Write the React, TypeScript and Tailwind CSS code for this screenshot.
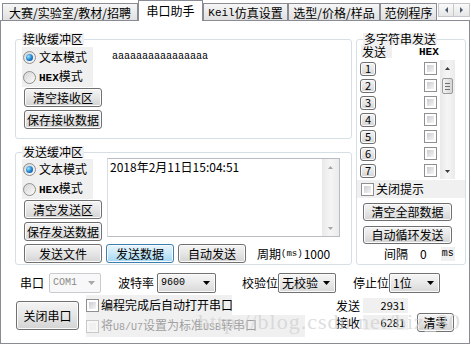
import React from "react";

type Dir = "up" | "down" | "left" | "right";

function Tri({ dir, color = "#3c3c3c", w = 5, h = 3 }: { dir: Dir; color?: string; w?: number; h?: number }) {
  const vert = dir === "up" || dir === "down";
  const W = vert ? w : h;
  const H = vert ? h : w;
  const pts = {
    up: `0,${H} ${W / 2},0 ${W},${H}`,
    down: `0,0 ${W},0 ${W / 2},${H}`,
    left: `${W},0 ${W},${H} 0,${H / 2}`,
    right: `0,0 ${W},${H / 2} 0,${H}`,
  }[dir];
  return (
    <svg width={W} height={H} viewBox={`0 0 ${W} ${H}`} className="block shrink-0">
      <polygon points={pts} fill={color} />
    </svg>
  );
}

function Btn({ children, className = "", hot = false }: { children: React.ReactNode; className?: string; hot?: boolean }) {
  return (
    <div
      className={`flex shrink-0 items-center justify-center rounded-[3px] border leading-none shadow-[inset_0_0_0_1px_#fbfbfb] ${
        hot
          ? "border-[#3c7fb1] bg-linear-to-b from-[#e8f5fc] via-[#c9e8f8] to-[#a2d6f3]"
          : "border-[#707070] bg-linear-to-b from-[#f4f4f4] via-[#e6e6e6] to-[#d3d3d3]"
      } ${className}`}
    >
      {children}
    </div>
  );
}

function Radio({ on = false }: { on?: boolean }) {
  return (
    <span className="flex h-[13px] w-[13px] shrink-0 items-center justify-center rounded-full border border-[#8e8f8f] bg-linear-to-br from-[#d4d4d4] to-[#fbfbfb]">
      {on && (
        <span className="h-[7px] w-[7px] rounded-full bg-[radial-gradient(circle_at_35%_35%,#9be6ff,#1d7ccc_55%,#0b3f78)]" />
      )}
    </span>
  );
}

function Check({ disabled = false }: { disabled?: boolean }) {
  return (
    <span
      className={`block h-[13px] w-[13px] shrink-0 border p-[2px] ${
        disabled ? "border-[#c8c8c8] bg-[#f7f7f7]" : "border-[#8f8f8f] bg-white"
      }`}
    >
      <span
        className={`block h-full w-full ${
          disabled ? "bg-[#f0f0f0]" : "bg-linear-to-br from-[#c9ccd1] to-[#f5f5f5]"
        }`}
      />
    </span>
  );
}

function Combo({ children, className = "", disabled = false }: { children: React.ReactNode; className?: string; disabled?: boolean }) {
  return (
    <div
      className={`flex h-[20px] shrink-0 items-center rounded-[2px] border pl-[3px] pr-[5px] ${
        disabled
          ? "border-[#c9cbcf] bg-[#f8f8f8] text-[#8a8a8a]"
          : "border-[#707070] bg-linear-to-b from-[#f6f6f6] via-[#e9e9e9] to-[#d8d8d8] shadow-[inset_0_0_0_1px_#fbfbfb]"
      } ${className}`}
    >
      <span className="flex-1 whitespace-nowrap">{children}</span>
      <Tri dir="down" w={7} h={4} color={disabled ? "#a8a8a8" : "#000"} />
    </div>
  );
}

function VScroll({ className = "", thumb = false, dim = false }: { className?: string; thumb?: boolean; dim?: boolean }) {
  const c = dim ? "#a6a6a6" : "#3c3c3c";
  return (
    <div className={`flex shrink-0 flex-col items-center bg-linear-to-r from-[#e9e9e9] via-[#f5f5f5] to-[#ebebeb] ${className}`}>
      <div className="flex h-[16px] w-full items-center justify-center">
        <Tri dir="up" color={c} />
      </div>
      {thumb && (
        <div className="mt-[2px] flex h-[16px] w-[11px] flex-col items-center justify-center gap-[2px] rounded-[2px] border border-[#9a9a9a] bg-linear-to-r from-[#f3f3f3] to-[#d6d6d6]">
          <span className="h-px w-[5px] bg-[#6f6f6f]" />
          <span className="h-px w-[5px] bg-[#6f6f6f]" />
          <span className="h-px w-[5px] bg-[#6f6f6f]" />
        </div>
      )}
      <div className="mt-auto flex h-[16px] w-full items-center justify-center">
        <Tri dir="down" color={c} />
      </div>
    </div>
  );
}

function Group({ title, className = "", children }: { title: string; className?: string; children: React.ReactNode }) {
  return (
    <fieldset className={`shrink-0 rounded-[3px] border border-[#d5dfe5] ${className}`}>
      <legend className="ml-[6px] bg-[#f0f0f0] px-px leading-[12px]">{title}</legend>
      {children}
    </fieldset>
  );
}

function Tab({ children, className = "" }: { children: React.ReactNode; className?: string }) {
  return (
    <div
      className={`flex h-[17px] shrink-0 items-center justify-center whitespace-nowrap border border-b-0 border-[#898c95] bg-linear-to-b from-[#f6f6f6] to-[#e0e0e0] pt-[2px] ${className}`}
    >
      {children}
    </div>
  );
}

const mono = "font-['Liberation_Mono',monospace]";

function ModeRadios() {
  return (
    <div className="w-[71px] bg-[#f0f0f0] pl-px">
      <div className="flex h-[20px] items-center">
        <Radio on />
        <span className="ml-[3px]">文本模式</span>
      </div>
      <div className="flex h-[20px] items-center">
        <Radio />
        <span className="ml-[3px]">
          <span className={`${mono} text-[11px] font-bold`}>HEX</span>模式
        </span>
      </div>
    </div>
  );
}

export default function App() {
  const rows = [1, 2, 3, 4, 5, 6, 7];
  return (
    <div className="relative h-[346px] w-[471px] overflow-hidden bg-white font-['Noto_Sans_CJK_SC','DejaVu_Sans',sans-serif] text-[12px] leading-[14px] text-black">
      {/* tabs */}
      <div className="flex h-[20px] items-end">
        <Tab className="ml-[2px] w-[136px]">大赛/实验室/教材/招聘</Tab>
        <div className="relative z-10 -mb-px flex h-[21px] w-[65px] shrink-0 items-center justify-center border border-b-0 border-[#898c95] bg-white">
          串口助手
        </div>
        <Tab className="w-[85px]">
          <span className={`${mono} text-[11px]`}>Keil</span>仿真设置
        </Tab>
        <Tab className="w-[92px]">选型/价格/样品</Tab>
        <Tab className="w-[57px]">范例程序</Tab>
        <div className="mb-[3px] ml-px flex">
          <div className="flex h-[14px] w-[16px] items-center justify-center border border-[#c4c7cc] bg-linear-to-b from-[#fafafa] to-[#e6e6e6]">
            <Tri dir="left" w={6} h={3} color="#4a5b70" />
          </div>
          <div className="flex h-[14px] w-[16px] items-center justify-center border border-l-0 border-[#c4c7cc] bg-linear-to-b from-[#fafafa] to-[#e6e6e6]">
            <Tri dir="right" w={6} h={3} color="#4a5b70" />
          </div>
        </div>
      </div>

      {/* panel */}
      <div className="h-[324px] w-[470px] border border-[#898c95]">
        <div className="ml-[14px] mt-[12px] flex">
          <div className="w-[337px] shrink-0">
            <Group title="接收缓冲区" className="h-[106px] w-[337px]">
              <div className="flex pl-[6px] pt-[2px]">
                <div className="w-[80px] shrink-0">
                  <ModeRadios />
                  <Btn className="ml-[2px] mt-px h-[19px] w-[78px]">清空接收区</Btn>
                  <Btn className="ml-[2px] mt-[3px] h-[19px] w-[78px]">保存接收数据</Btn>
                </div>
                <div className={`ml-[10px] flex h-[20px] items-center ${mono} text-[10px]`}>aaaaaaaaaaaaaaaa</div>
              </div>
            </Group>

            <Group title="发送缓冲区" className="mt-[7px] h-[119px] w-[337px]">
              <div className="flex pl-[6px]">
                <div className="w-[80px] shrink-0 pt-px">
                  <ModeRadios />
                  <Btn className="ml-[2px] mt-px h-[19px] w-[78px]">清空发送区</Btn>
                  <Btn className="ml-[2px] mt-[3px] h-[19px] w-[78px]">保存发送数据</Btn>
                </div>
                <div className="ml-[5px] flex h-[79px] w-[233px] shrink-0 border border-[#b9bcc3] border-l-[#d9dce2] bg-white">
                  <div className="flex-1 whitespace-nowrap pl-[2px] pt-px">2018年2月11日15:04:51</div>
                  <VScroll dim className="h-full w-[17px]" />
                </div>
              </div>
              <div className="mt-[3px] flex items-center pl-[8px]">
                <Btn className="h-[19px] w-[78px]">发送文件</Btn>
                <Btn hot className="ml-[4px] h-[19px] w-[68px]">发送数据</Btn>
                <Btn className="ml-[4px] h-[19px] w-[68px]">自动发送</Btn>
                <span className="ml-[11px]">周期</span>
                <span className={`${mono} text-[9px]`}>(ms)</span>
                <span className="ml-px">1000</span>
              </div>
            </Group>
          </div>

          <Group title="多字符串发送" className="ml-[4px] h-[232px] w-[110px]">
            <div className="flex h-[13px] items-center pl-[4px]">
              <span className="w-[31px] bg-[#f0f0f0] pl-px leading-[13px]">发送</span>
              <span className={`ml-[27px] ${mono} text-[11px] font-bold`}>HEX</span>
            </div>
            <div className="mt-[2px] flex">
              <div className="w-[83px] shrink-0">
                {rows.map((n) => (
                  <div key={n} className="flex h-[17px] items-center px-[3px]">
                    <Btn className="h-[14px] w-[16px] text-[11px]">{n}</Btn>
                    <span className="ml-auto">
                      <Check />
                    </span>
                  </div>
                ))}
              </div>
              <VScroll thumb className="h-[119px] w-[15px]" />
            </div>
            <div className="mt-px flex h-[18px] items-center bg-[#f0f0f0] pl-[4px]">
              <Check />
              <span className="ml-[2px]">关闭提示</span>
            </div>
            <Btn className="ml-[6px] mt-[5px] h-[18px] w-[89px]">清空全部数据</Btn>
            <Btn className="ml-[6px] mt-[5px] h-[18px] w-[89px]">自动循环发送</Btn>
            <div className="mt-[2px] flex h-[15px] items-center pl-[27px]">
              <span>间隔</span>
              <span className="ml-[12px]">0</span>
              <span className={`ml-[14px] bg-[#f0f0f0] px-px ${mono} text-[10px]`}>ms</span>
            </div>
          </Group>
        </div>

        {/* port settings */}
        <div className="mt-[8px] flex h-[20px] items-center pl-[19px]">
          <span>串口</span>
          <Combo disabled className={`ml-[5px] w-[52px] ${mono} text-[10px]`}>
            COM1
          </Combo>
          <span className="ml-[17px]">波特率</span>
          <Combo className={`ml-[3px] w-[59px] ${mono} text-[10px]`}>9600</Combo>
          <span className="ml-[26px]">校验位</span>
          <Combo className="w-[58px]">无校验</Combo>
          <span className="ml-[17px]">停止位</span>
          <Combo className="w-[51px]">1位</Combo>
        </div>

        <div className="mt-px flex h-[49px]">
          <Btn className="ml-[15px] mt-[7px] h-[29px] w-[63px]">关闭串口</Btn>
          <div className="ml-[7px] w-[219px] shrink-0">
            <div className="mt-px flex h-[20px] w-[146px] items-center bg-[#f0f0f0]">
              <Check />
              <span className="ml-[2px] whitespace-nowrap">编程完成后自动打开串口</span>
            </div>
            <div className="flex h-[22px] w-[219px] items-center bg-[#f0f0f0] text-[#a0a0a0]">
              <Check disabled />
              <span className="ml-[2px] whitespace-nowrap">
                将<span className={`${mono} text-[10px]`}>U8/U7</span>设置为标准
                <span className={`${mono} text-[10px]`}>USB</span>转串口
              </span>
            </div>
          </div>
          <div className="ml-[31px] shrink-0">
            <div className="mt-[4px] flex h-[15px] items-center">
              <span className="w-[27px]">发送</span>
              <span className="h-[15px] w-[45px] bg-[#f0f0f0] pr-[3px] text-right text-[11px] leading-[15px]">2931</span>
            </div>
            <div className="mt-[2px] flex h-[15px] items-center">
              <span className="w-[27px]">接收</span>
              <span className="h-[15px] w-[45px] bg-[#f0f0f0] pr-[3px] text-right text-[11px] leading-[15px]">6281</span>
            </div>
          </div>
          <Btn className="ml-[9px] mt-[19px] h-[19px] w-[37px]">清零</Btn>
        </div>
      </div>

      {/* watermark */}
      <div className="pointer-events-none absolute left-[198px] top-[311px] whitespace-nowrap font-['Liberation_Serif',serif] text-[22px] leading-[22px] tracking-[1px] text-[#cfcfcf]/70">
        http://blog.csdn.net/biz_80
      </div>
    </div>
  );
}
